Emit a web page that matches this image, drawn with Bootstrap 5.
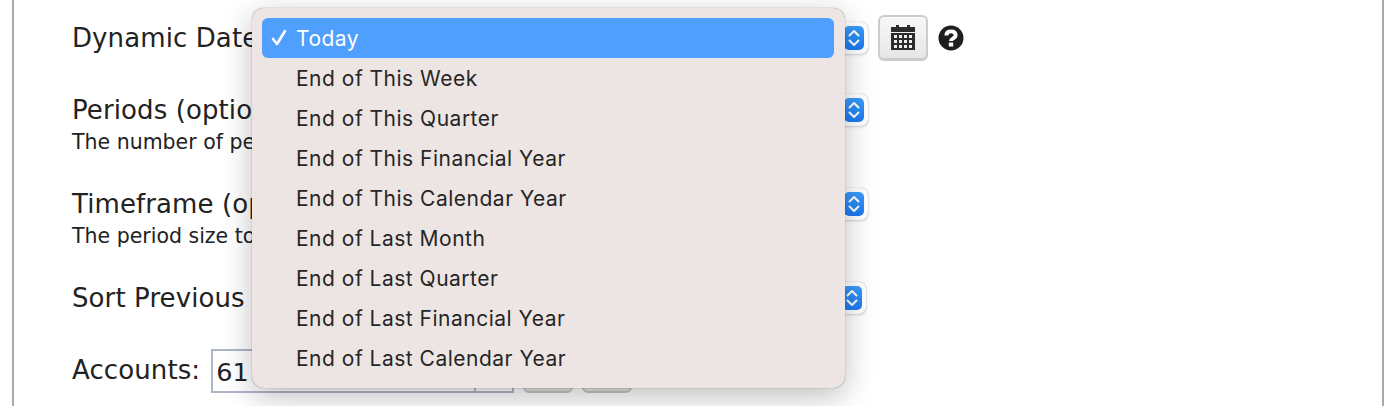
<!DOCTYPE html>
<html lang="en">
<head>
<meta charset="utf-8">
<title>Dynamic Date</title>
<link href="https://cdn.jsdelivr.net/npm/bootstrap@5.3.0/dist/css/bootstrap.min.css" rel="stylesheet">
<style>
html,body{height:406px;overflow:hidden;background:#fff}
body{font-family:"DejaVu Sans",sans-serif;color:#222;font-size:26px;position:relative}
.frame{margin:0 12px;border-left:2px solid #aaa;border-right:2px solid #aaa;height:406px;padding:15px 0 0 58px}
.form-line{display:flex;align-items:center;width:796px;flex:none}
.line-text{font-size:26px;line-height:32px;white-space:nowrap;letter-spacing:.1px}
.help-text{font-size:20.5px;line-height:24px;white-space:nowrap;margin-top:4px}
.mac-select{margin-left:auto;width:200px;height:32px;background:#fff;border-radius:7px;box-shadow:0 0 1px rgba(0,0,0,.35),0 1px 3px rgba(0,0,0,.16);display:flex;justify-content:flex-end;padding:4px;flex:none}
.stepper{width:20px;height:24px;border-radius:5px;background:linear-gradient(#3b9bfb,#1a7af0);display:flex;align-items:center;justify-content:center}
.cal-btn{width:50px;height:46px;margin-left:10px;padding:0;display:flex;align-items:center;justify-content:center;border:2px solid #ccc;border-radius:6px;background:linear-gradient(#f8f8f8,#e6e6e6);flex:none;border-bottom-width:3px}
.help-dot{margin-left:10px;flex:none}
.acc-input{display:flex;width:303px;height:44px;margin-top:2px;border:2px solid #aeb6c6;margin-left:11px;font-size:25.5px;line-height:42px;padding-left:3px;background:#fff}
.acc-split{width:38px;margin-left:auto;border-left:2px solid #aeb6c6}
.grey-btn{width:50px;height:44px;margin-top:2px;margin-left:9px;background:#e4e4e4;border:2px solid #c4c4c4;border-radius:6px;flex:none;padding:0}
.mac-menu.dropdown-menu{display:block;position:absolute;left:252px;top:8px;width:593px;height:380px;padding:10px 11px 10px 10px;background:#ede5e3;border:0;border-radius:12px;box-shadow:0 0 1px rgba(0,0,0,.6),0 8px 30px rgba(0,0,0,.26);font-family:Inter,sans-serif;--bs-dropdown-min-width:0}
.mac-menu .dropdown-item{height:40px;line-height:41px;padding:0 0 0 34px;font-size:21px;color:#262626;border-radius:6px;position:relative;letter-spacing:.5px;background:none}
.mac-menu .dropdown-item.active{background:#4f9ffe;color:#fff}
.tick{position:absolute;left:8px;top:11px}
</style>
</head>
<body>
<div class="frame">
  <div class="d-flex align-items-center" id="r1">
    <div class="form-line">
      <span class="line-text">Dynamic Date</span>
      <div class="mac-select"><span class="stepper"><svg width="14" height="20" viewBox="0 0 14 20" fill="none" stroke="#fff" stroke-width="2" stroke-linecap="round" stroke-linejoin="round"><path d="M2.500 7.500L7 3l4.500 4.500M2.500 12.500L7 17l4.500-4.500"/></svg></span></div>
    </div>
    <button class="cal-btn" type="button" aria-label="Calendar"><svg width="26" height="28" viewBox="0 0 26 28"><path fill="#2b2b2b" d="M1 3h5V1h3v2h8V1h3v2h5v5H1z"/><path fill="#2b2b2b" fill-rule="evenodd" d="M1 9h24v17H1zM4 11v3h3v-3zm5 0v3h3v-3zm5 0v3h3v-3zm5 0v3h3v-3zM4 16v3h3v-3zm5 0v3h3v-3zm5 0v3h3v-3zm5 0v3h3v-3zM4 21v3h3v-3zm5 0v3h3v-3zm5 0v3h3v-3zm5 0v3h3v-3z"/></svg></button>
    <svg class="help-dot" width="26" height="26" viewBox="0 0 26 26"><circle cx="13" cy="13" r="12.500" fill="#1e1e1e"/><path fill="none" stroke="#fff" stroke-width="3.900" d="M8.400 10.400c0-2.700 2-4 4.600-4s4.600 1.300 4.600 3.800c0 3.400-4.600 3-4.600 5.800"/><rect x="10.800" y="17.500" width="4.400" height="4" fill="#fff"/></svg>
  </div>
  <div class="form-line align-items-start" style="margin-top:33px" id="r2">
    <div><div class="line-text">Periods (optio</div><div class="help-text">The number of pe</div></div>
    <div class="mac-select"><span class="stepper"><svg width="14" height="20" viewBox="0 0 14 20" fill="none" stroke="#fff" stroke-width="2" stroke-linecap="round" stroke-linejoin="round"><path d="M2.500 7.500L7 3l4.500 4.500M2.500 12.500L7 17l4.500-4.500"/></svg></span></div>
  </div>
  <div class="form-line align-items-start" style="margin-top:34px" id="r3">
    <div><div class="line-text">Timeframe (op</div><div class="help-text">The period size to</div></div>
    <div class="mac-select"><span class="stepper"><svg width="14" height="20" viewBox="0 0 14 20" fill="none" stroke="#fff" stroke-width="2" stroke-linecap="round" stroke-linejoin="round"><path d="M2.500 7.500L7 3l4.500 4.500M2.500 12.500L7 17l4.500-4.500"/></svg></span></div>
  </div>
  <div class="form-line" style="margin-top:34px;width:794px" id="r4">
    <span class="line-text">Sort Previous</span>
    <div class="mac-select"><span class="stepper"><svg width="14" height="20" viewBox="0 0 14 20" fill="none" stroke="#fff" stroke-width="2" stroke-linecap="round" stroke-linejoin="round"><path d="M2.500 7.500L7 3l4.500 4.500M2.500 12.500L7 17l4.500-4.500"/></svg></span></div>
  </div>
  <div class="d-flex align-items-center" style="margin-top:33px" id="r5">
    <span class="line-text">Accounts:</span>
    <div class="acc-input">61<span class="acc-split"></span></div>
    <button class="grey-btn" type="button" aria-label="Add"></button>
    <button class="grey-btn" type="button" aria-label="Remove"></button>
  </div>
</div>
<ul class="dropdown-menu mac-menu list-unstyled mb-0">
  <li><span class="dropdown-item active"><svg class="tick" width="18" height="18" viewBox="0 0 18 18" fill="none" stroke="#fff" stroke-width="2.600" stroke-linecap="round" stroke-linejoin="round"><path d="M3 10l4 5 8-13"/></svg>Today</span></li>
  <li><span class="dropdown-item">End of This Week</span></li>
  <li><span class="dropdown-item">End of This Quarter</span></li>
  <li><span class="dropdown-item">End of This Financial Year</span></li>
  <li><span class="dropdown-item">End of This Calendar Year</span></li>
  <li><span class="dropdown-item">End of Last Month</span></li>
  <li><span class="dropdown-item">End of Last Quarter</span></li>
  <li><span class="dropdown-item">End of Last Financial Year</span></li>
  <li><span class="dropdown-item">End of Last Calendar Year</span></li>
</ul>
<script src="https://cdn.jsdelivr.net/npm/bootstrap@5.3.0/dist/js/bootstrap.bundle.min.js"></script>
</body>
</html>
